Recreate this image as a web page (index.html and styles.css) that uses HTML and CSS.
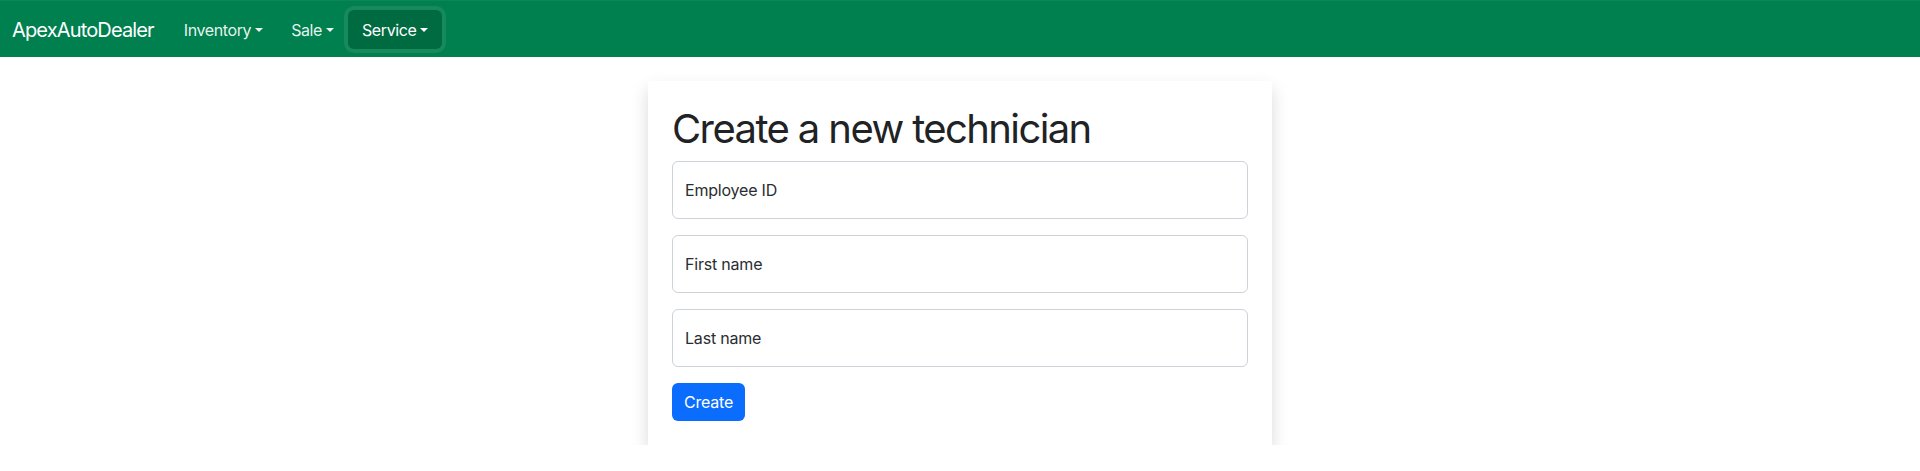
FILE: index.html
```html
<!DOCTYPE html>
<html lang="en">
<head>
<meta charset="utf-8">
<title>ApexAutoDealer</title>
<link rel="stylesheet" href="styles.css">
</head>
<body>
<nav class="navbar">
  <a class="brand" href="#">ApexAutoDealer</a>
  <ul class="nav">
    <li><a class="nav-link" href="#">Inventory<span class="caret"></span></a></li>
    <li><a class="nav-link" href="#">Sale<span class="caret"></span></a></li>
    <li><a class="nav-link active" href="#">Service<span class="caret"></span></a></li>
  </ul>
</nav>
<main class="page">
  <div class="card">
    <h1 class="title">Create a new technician</h1>
    <form class="form">
      <div class="field">
        <input class="input" type="text" id="employee_id">
        <label class="label" for="employee_id">Employee ID</label>
      </div>
      <div class="field">
        <input class="input" type="text" id="first_name">
        <label class="label" for="first_name">First name</label>
      </div>
      <div class="field">
        <input class="input" type="text" id="last_name">
        <label class="label" for="last_name">Last name</label>
      </div>
      <button class="btn" type="button">Create</button>
    </form>
  </div>
</main>
</body>
</html>
```
FILE: styles.css
```css
* { box-sizing: border-box; }
html, body { margin: 0; padding: 0; }
body {
  font-family: Inter, "Liberation Sans", sans-serif;
  font-size: 16px;
  line-height: 1.5;
  color: #1f2326;
  background: #fff;
}
.navbar {
  display: flex;
  align-items: center;
  height: 57px;
  padding: 1px 12px 0;
  background: #007f4f;
  border-top: 1px solid #0d8655;
}
.brand {
  color: #fff;
  text-decoration: none;
  font-size: 20px;
  line-height: 30px;
  margin-right: 16px;
  letter-spacing: -0.85px;
}
.nav {
  display: flex;
  list-style: none;
  margin: 0;
  padding: 0;
}
.nav-link {
  display: flex;
  align-items: center;
  height: 39px;
  padding: 0 14px;
  color: rgba(255,255,255,0.92);
  text-decoration: none;
  border-radius: 6px;
  letter-spacing: -0.4px;
}
.nav-link.active {
  color: #fff;
  background: #006a41;
  box-shadow: 0 0 0 4px #168a5c;
}
.caret {
  display: inline-block;
  margin-left: 4px;
  width: 0;
  height: 0;
  border-top: 4.8px solid currentColor;
  border-left: 4.8px solid transparent;
  border-right: 4.8px solid transparent;
}
.page {
  display: flex;
  justify-content: center;
  padding-top: 24px;
}
.card {
  width: 624px;
  padding: 24px;
  background: #fff;
  box-shadow: 0 8px 16px rgba(0,0,0,0.15);
}
.title {
  margin: 0 0 8px;
  font-size: 40px;
  font-weight: 400;
  line-height: 48px;
  letter-spacing: -1.6px;
  color: #1f2326;
}
.form { display: flex; flex-direction: column; align-items: flex-start; }
.field {
  position: relative;
  width: 100%;
  margin-bottom: 16px;
}
.input {
  display: block;
  width: 100%;
  height: 58px;
  padding: 16px 12px;
  border: 1px solid #cdd3d9;
  border-radius: 6px;
  font: inherit;
  background: #fff;
}
.label {
  position: absolute;
  left: 0;
  top: 0;
  height: 100%;
  padding: 16px 13px;
  line-height: 26px;
  color: #2a2d31;
  pointer-events: none;
  letter-spacing: -0.2px;
}
.btn {
  height: 38px;
  padding: 0 12px;
  border: 0;
  border-radius: 6px;
  background: #0a6dfd;
  color: #fff;
  font: inherit;
  letter-spacing: -0.2px;
  cursor: pointer;
}
```
